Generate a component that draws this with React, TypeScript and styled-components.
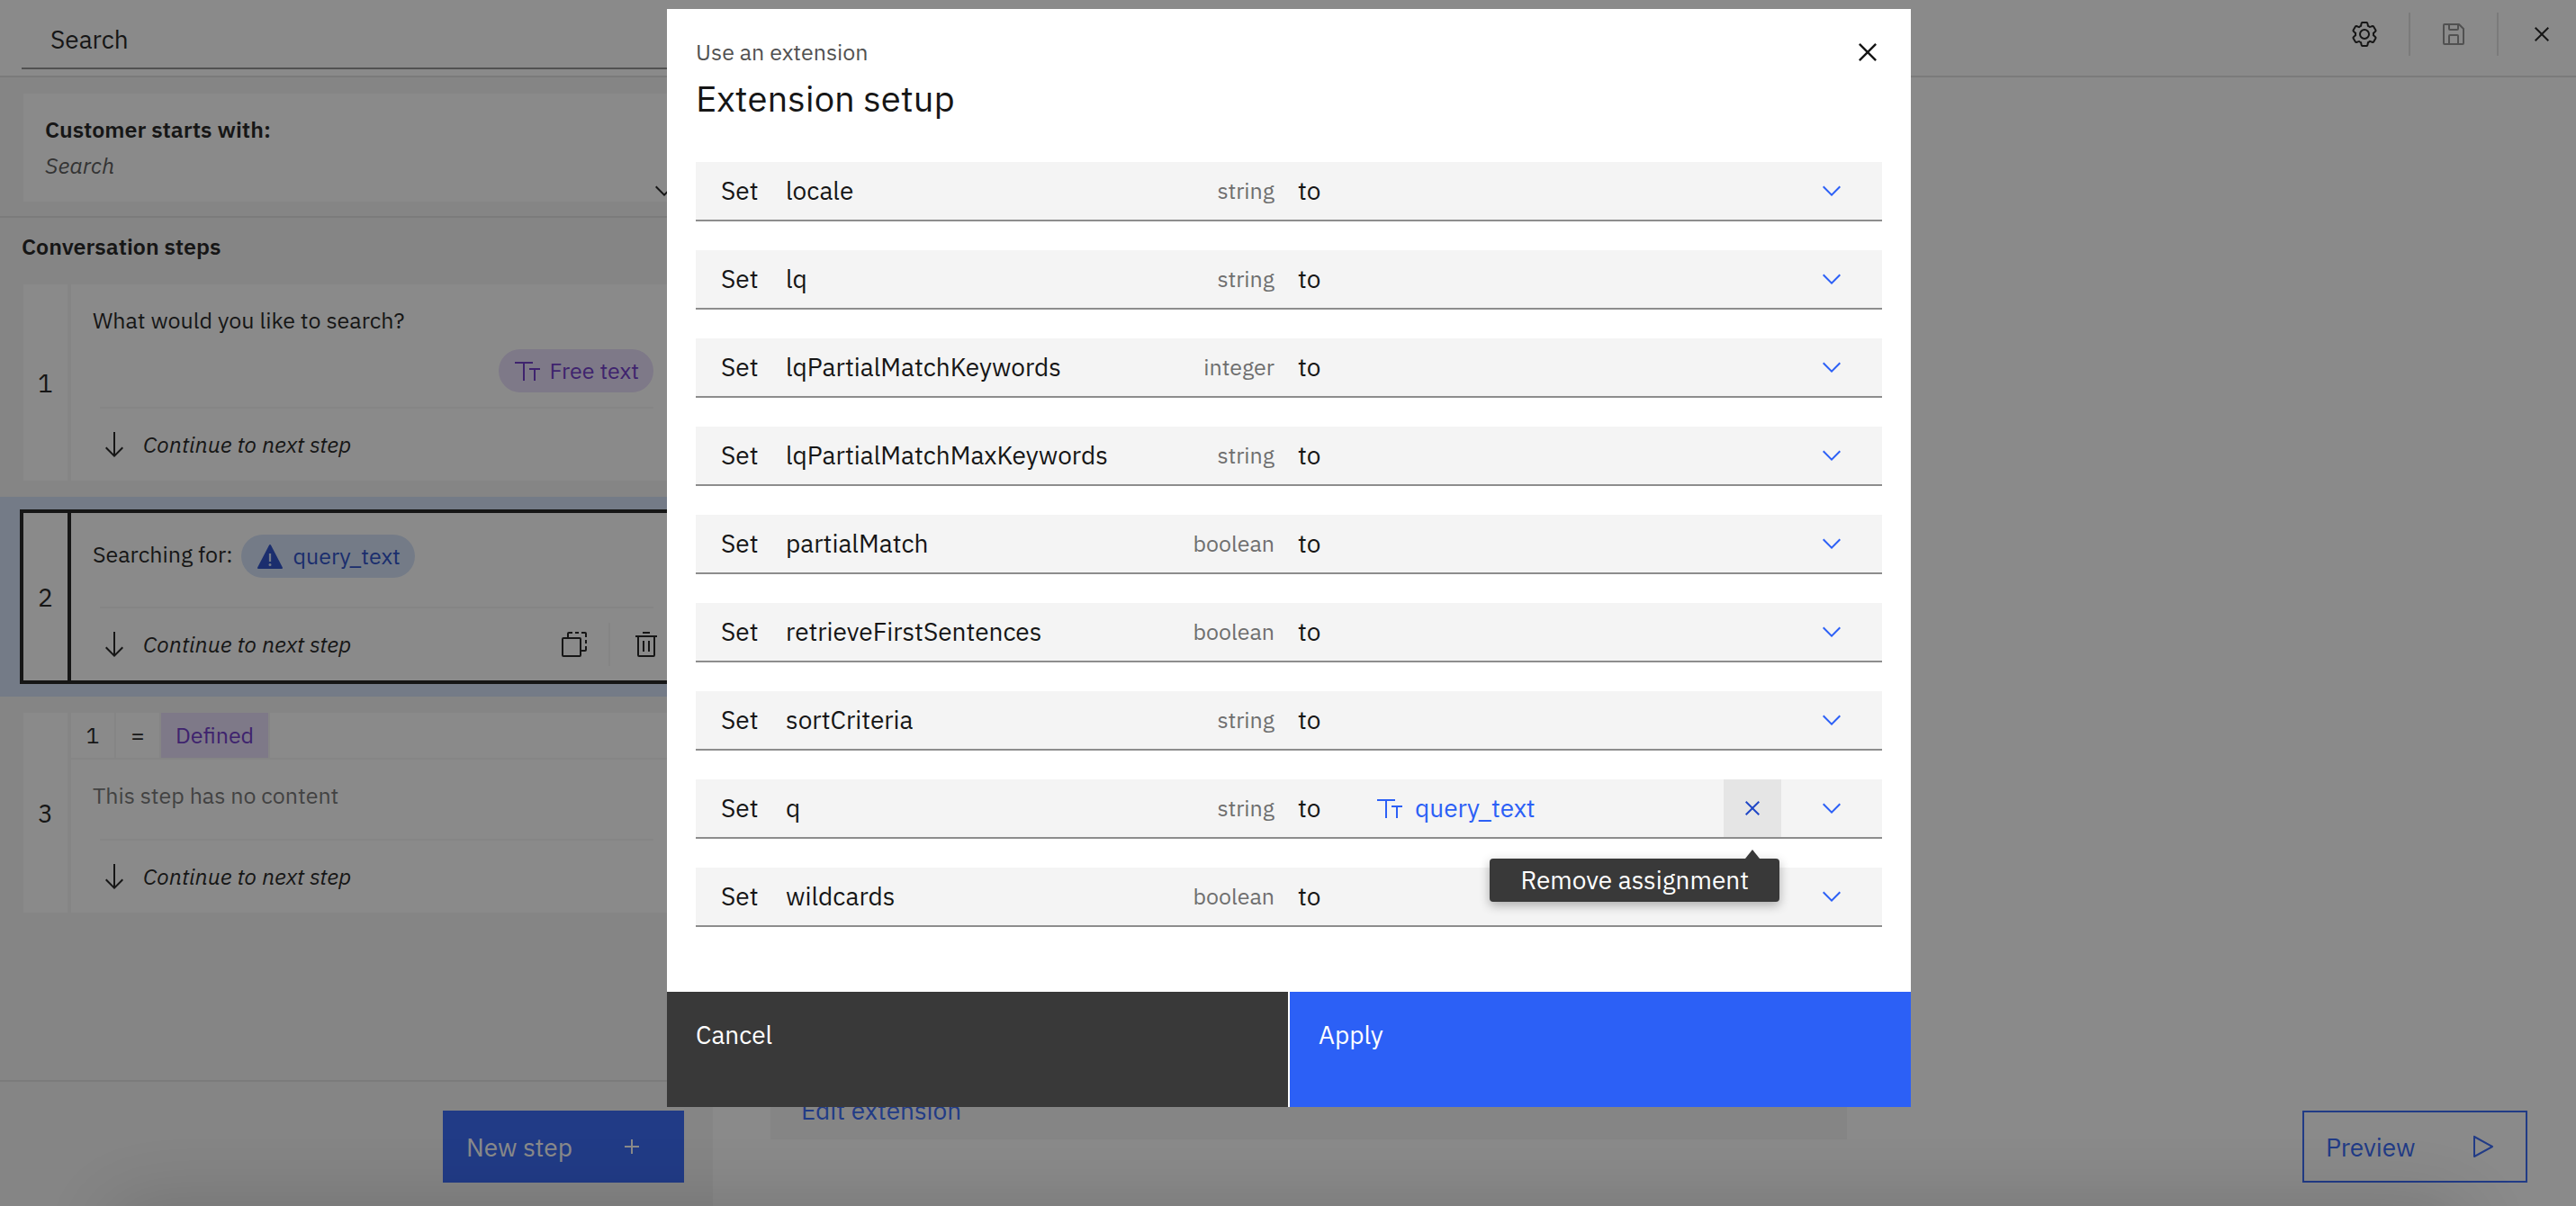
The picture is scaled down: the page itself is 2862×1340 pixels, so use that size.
import React from "react";
import styled, { createGlobalStyle, css } from "styled-components";

const color = {
  white: "#ffffff",
  layer: "#f4f4f4",
  border: "#e0e0e0",
  strong: "#8d8d8d",
  text: "#161616",
  secondary: "#525252",
  helper: "#6f6f6f",
  blue: "#2c60f6",
  blueHover: "#2047c6",
  blueTint: "#d3e1f9",
  purple: "#6831c6",
  purpleTint: "#e6dcfa",
  dark: "#393939",
};

const GlobalStyle = createGlobalStyle`
  *, *::before, *::after { box-sizing: border-box; }
  body { margin: 0; background: ${color.white}; }
  body, button, input {
    font-family: "IBM Plex Sans", Roboto, "Liberation Sans", sans-serif;
    color: ${color.text};
  }
  h1, h2, h3, p, ol, ul { margin: 0; padding: 0; font-weight: 400; }
  ol, ul { list-style: none; }
  button { border: 0; padding: 0; background: none; font-size: 28px; cursor: pointer; }
`;

/* ---------- icons ---------- */

const Svg = styled.svg<{ $size: number }>`
  display: block;
  flex: none;
  width: ${(p) => p.$size}px;
  height: ${(p) => p.$size}px;
  fill: currentColor;
`;

const glyphs = {
  close: "M24 9.4L22.6 8 16 14.6 9.4 8 8 9.4 14.6 16 8 22.6 9.4 24 16 17.4 22.6 24 24 22.6 17.4 16z",
  chevron: "M16 22L6 12 7.4 10.6 16 19.2 24.6 10.6 26 12z",
  add: "M17 15V8h-2v7H8v2h7v7h2v-7h7v-2z",
  play: "M7 28a1 1 0 0 1-1-1V5a1 1 0 0 1 1.48-.88l20 11a1 1 0 0 1 0 1.76l-20 11A1 1 0 0 1 7 28zM8 6.69V25.31L24.93 16z",
  text: "M23 27V15H18V13H30v2H25V27zM11 27V8H2V6H22V8H13V27z",
  arrow: "M15 2h2v24.17l7.59-7.58L26 20 16 30 6 20l1.41-1.41L15 26.17z",
  warning:
    "M29.89 28.54l-13-25a1 1 0 0 0-1.78 0l-13 25A1 1 0 0 0 3 30H29a1 1 0 0 0 .89-1.46zM14.88 13h2.25v9h-2.25zM16 27a1.5 1.5 0 1 1 1.5-1.5A1.5 1.5 0 0 1 16 27z",
  trash:
    "M12 12h2v12h-2zM18 12h2v12h-2zM4 6v2h2v20a2 2 0 0 0 2 2h16a2 2 0 0 0 2-2V8h2V6zM8 28V8h16v20zM12 2h8v2h-8z",
  save: "M27.71 9.29l-5-5A1 1 0 0 0 22 4H6A2 2 0 0 0 4 6V26a2 2 0 0 0 2 2H26a2 2 0 0 0 2-2V10a1 1 0 0 0-.29-.71zM12 6h8v4H12zm8 20H12V18h8zm2 0V18a2 2 0 0 0-2-2H12a2 2 0 0 0-2 2v8H6V6h4v4a2 2 0 0 0 2 2h8a2 2 0 0 0 2-2V6.41l4 4V26z",
  settings:
    "M27 16.76c0-.25 0-.5 0-.76s0-.51 0-.77l1.92-1.68A2 2 0 0 0 29.3 11L26.94 7a2 2 0 0 0-1.73-1 2 2 0 0 0-.64.1l-2.43.82a11.35 11.35 0 0 0-1.31-.75l-.51-2.52a2 2 0 0 0-2-1.61H13.64a2 2 0 0 0-2 1.61l-.51 2.52a11.48 11.48 0 0 0-1.32.75L7.43 6.06A2 2 0 0 0 6.79 6 2 2 0 0 0 5.06 7L2.7 11a2 2 0 0 0 .41 2.51L5 15.24c0 .25 0 .5 0 .76s0 .51 0 .77L3.11 18.45A2 2 0 0 0 2.7 21L5.06 25a2 2 0 0 0 1.73 1 2 2 0 0 0 .64-.1l2.43-.82a11.35 11.35 0 0 0 1.31.75l.51 2.52a2 2 0 0 0 2 1.61h4.72a2 2 0 0 0 2-1.61l.51-2.52a11.48 11.48 0 0 0 1.32-.75l2.42.82a2 2 0 0 0 .64.1 2 2 0 0 0 1.73-1L29.3 21a2 2 0 0 0-.41-2.51zM25.21 24l-3.43-1.16a8.86 8.86 0 0 1-2.71 1.57L18.36 28H13.64l-.71-3.55a9.36 9.36 0 0 1-2.7-1.57L6.79 24 4.43 20l2.72-2.4a8.9 8.9 0 0 1 0-3.13L4.43 12 6.79 8l3.43 1.16a8.86 8.86 0 0 1 2.71-1.57L13.64 4h4.72l.71 3.55a9.36 9.36 0 0 1 2.7 1.57L25.21 8 27.57 12l-2.72 2.4a8.9 8.9 0 0 1 0 3.13L27.57 20zM16 22a6 6 0 1 1 6-6A5.94 5.94 0 0 1 16 22zm0-10a3.91 3.91 0 0 0-4 4 3.91 3.91 0 0 0 4 4 3.91 3.91 0 0 0 4-4A3.91 3.91 0 0 0 16 12z",
  duplicate:
    "M22 10v18H4V10h18m0-2H4a2 2 0 0 0-2 2v18a2 2 0 0 0 2 2h18a2 2 0 0 0 2-2V10a2 2 0 0 0-2-2zM8 8V4a2 2 0 0 1 2-2h4v2h-4v4zM17 2h4v2h-4zM24 2h4a2 2 0 0 1 2 2v4h-2V4h-4zM28 11h2v4h-2zM24 22h4v-4h2v4a2 2 0 0 1-2 2h-4z",
};

function Icon({ name, size = 32 }: { name: keyof typeof glyphs; size?: number }) {
  return (
    <Svg $size={size} viewBox="0 0 32 32" aria-hidden="true">
      <path fillRule="evenodd" d={glyphs[name]} />
    </Svg>
  );
}

/* ---------- page behind the dialog ---------- */

const Page = styled.div`
  position: relative;
  display: flex;
  flex-direction: column;
  height: 100vh;
  overflow: hidden;
`;

const Header = styled.header`
  display: flex;
  justify-content: space-between;
  border-bottom: 2px solid ${color.border};
  flex: none;
`;

const TitleField = styled.input`
  width: 744px;
  margin: 13px 0 7px 24px;
  height: 64px;
  padding: 0 32px 2px;
  border: 0;
  border-bottom: 2px solid ${color.strong};
  background: none;
  font-size: 28px;
`;

const HeaderActions = styled.div`
  display: flex;
  align-items: center;
  height: 76px;
`;

const HeaderButton = styled.button<{ $disabled?: boolean; $last?: boolean }>`
  display: flex;
  align-items: center;
  justify-content: center;
  height: 48px;
  width: ${(p) => (p.$last ? 88 : 98)}px;
  padding-left: ${(p) => (p.$last ? 10 : 0)}px;
  color: ${(p) => (p.$disabled ? color.strong : color.text)};
  & + & {
    border-left: 2px solid ${color.border};
  }
`;

const Workspace = styled.div`
  display: flex;
  flex: 1;
  min-height: 0;
`;

const StepsPanel = styled.aside`
  display: flex;
  flex-direction: column;
  flex: none;
  width: 792px;
  background: ${color.layer};
`;

const StartSection = styled.section`
  padding: 18px 26px 16px;
  border-bottom: 2px solid ${color.border};
`;

const StartCard = styled.div`
  display: grid;
  grid-template-columns: 1fr auto;
  align-items: end;
  height: 120px;
  padding: 20px 12px 0 24px;
  background: ${color.white};
`;

const StartText = styled.div`
  align-self: start;
  font-size: 25px;
  line-height: 40px;
`;

const StartTitle = styled.h2`
  font-size: 25px;
  font-weight: 600;
`;

const Phrase = styled.p`
  color: ${color.secondary};
  font-style: italic;
`;

const CollapseButton = styled.button`
  display: flex;
  align-items: center;
  height: 24px;
`;

const StepsTitle = styled.h2`
  padding: 16px 24px 26px;
  font-size: 25px;
  line-height: 32px;
  font-weight: 600;
`;

const StepList = styled.ol`
  display: flex;
  flex-direction: column;
  gap: 18px;
  flex: 1;
`;

const StepItem = styled.li<{ $selected?: boolean }>`
  padding: 0 26px;
  ${(p) =>
    p.$selected &&
    css`
      padding: 14px 22px;
      background: ${color.blueTint};
    `}
`;

const StepCard = styled.div<{ $selected?: boolean }>`
  display: flex;
  background: ${color.white};
  border: ${(p) => (p.$selected ? `4px solid ${color.text}` : "0")};
`;

const StepNumber = styled.div<{ $selected?: boolean }>`
  display: flex;
  align-items: center;
  justify-content: center;
  width: 53px;
  border-right: 4px solid ${(p) => (p.$selected ? color.text : color.layer)};
  font-size: 28px;
`;

const StepMain = styled.div`
  flex: 1;
  font-size: 25px;
  line-height: 32px;
`;

const Conditions = styled.div`
  display: flex;
  border-bottom: 2px solid ${color.layer};
`;

const Condition = styled.span<{ $tinted?: boolean }>`
  min-width: 50px;
  padding: 9px 16px;
  text-align: center;
  border-right: 2px solid ${color.layer};
  ${(p) =>
    p.$tinted &&
    css`
      color: ${color.purple};
      background: ${color.purpleTint};
    `}
`;

const StepBody = styled.div<{ $tall?: boolean }>`
  display: flex;
  flex-direction: column;
  gap: 16px;
  padding: 24px 40px ${(p) => (p.$tall ? 32 : 16)}px 24px;
`;

const StepText = styled.p<{ $muted?: boolean; $withTag?: boolean }>`
  display: flex;
  align-items: flex-start;
  gap: 10px;
  line-height: ${(p) => (p.$withTag ? 44 : 32)}px;
  color: ${(p) => (p.$muted ? color.helper : color.text)};
`;

const Tag = styled.span<{ $tone: "purple" | "blue" }>`
  display: inline-flex;
  align-items: center;
  align-self: flex-end;
  gap: 9px;
  height: 48px;
  padding: 0 16px;
  border-radius: 24px;
  ${(p) =>
    p.$tone === "purple"
      ? css`
          color: ${color.purple};
          background: ${color.purpleTint};
        `
      : css`
          color: ${color.blueHover};
          background: ${color.blueTint};
        `}
`;

const StepFooter = styled.div`
  display: flex;
  align-items: center;
  height: 82px;
  margin: 0 40px 0 32px;
  border-top: 2px solid ${color.layer};
`;

const NextAction = styled.span`
  display: flex;
  align-items: center;
  gap: 16px;
  flex: 1;
  font-style: italic;
`;

const StepTool = styled.button`
  display: flex;
  align-items: center;
  justify-content: center;
  width: 76px;
  height: 48px;
  & + & {
    width: 82px;
    margin-right: -32px;
    border-left: 2px solid ${color.layer};
  }
`;

const PanelFooter = styled.div`
  display: flex;
  justify-content: flex-end;
  padding: 32px 32px 26px;
  border-top: 2px solid ${color.border};
`;

const ActionButton = styled.button<{ $kind: "primary" | "tertiary" }>`
  display: flex;
  align-items: center;
  justify-content: space-between;
  height: 80px;
  width: ${(p) => (p.$kind === "primary" ? 268 : 250)}px;
  padding: 0 ${(p) => (p.$kind === "primary" ? 40 : 32)}px 0 24px;
  border: 2px solid ${color.blue};
  color: ${(p) => (p.$kind === "primary" ? color.white : color.blue)};
  background: ${(p) => (p.$kind === "primary" ? color.blue : "transparent")};
`;

const Editor = styled.main`
  display: flex;
  flex: 1;
  align-items: flex-end;
  justify-content: space-between;
  padding: 0 54px 26px 64px;
`;

const ExtensionCard = styled.section`
  flex: 0 1 1196px;
  margin-bottom: 48px;
  padding: 400px 34px 16px;
  background: ${color.layer};
`;

const EditLink = styled.a`
  color: ${color.blue};
  font-size: 28px;
  line-height: 32px;
  text-decoration: none;
`;

const DockShade = styled.div`
  position: absolute;
  left: 120px;
  right: 120px;
  top: 100%;
  height: 80px;
  border-radius: 40px;
  box-shadow: 0 0 80px rgba(0, 0, 0, 0.16);
`;

/* ---------- dialog ---------- */

const Overlay = styled.div`
  position: absolute;
  inset: 0;
  display: flex;
  align-items: flex-start;
  justify-content: center;
  padding: 10px 0 0 2px;
  background: rgba(22, 22, 22, 0.5);
`;

const Dialog = styled.div`
  width: 100%;
  max-width: 1382px;
  background: ${color.white};
`;

const DialogHeader = styled.div`
  display: flex;
  align-items: flex-start;
  justify-content: space-between;
  padding: 28px 28px 0 32px;
`;

const DialogLabel = styled.p`
  color: ${color.secondary};
  font-size: 25px;
  line-height: 40px;
`;

const DialogTitle = styled.h1`
  font-size: 40px;
  line-height: 62px;
`;

const CloseButton = styled.button`
  display: block;
  height: 40px;
`;

const Assignments = styled.ul`
  display: flex;
  flex-direction: column;
  gap: 32px;
  padding: 40px 32px 72px;
`;

const Assignment = styled.li`
  display: grid;
  grid-template-columns: 72px 569fr 86px 387fr 64px 112px;
  align-items: center;
  height: 66px;
  padding-left: 28px;
  border-bottom: 2px solid ${color.strong};
  background: ${color.layer};
  font-size: 28px;
  line-height: 32px;
`;

const Variable = styled.span`
  display: flex;
  align-items: center;
  justify-content: space-between;
  margin-right: 26px;
`;

const TypeName = styled.span`
  color: ${color.helper};
  font-size: 25px;
`;

const Value = styled.span`
  display: flex;
  align-items: center;
  gap: 12px;
  color: ${color.blue};
`;

const RemoveWrap = styled.span`
  position: relative;
`;

const RemoveButton = styled.button`
  display: flex;
  align-items: center;
  justify-content: center;
  width: 64px;
  height: 64px;
  color: ${color.blueHover};
  background: #e5e5e5;
`;

const Tooltip = styled.span`
  position: absolute;
  z-index: 1;
  top: 88px;
  right: 2px;
  padding: 0 34px;
  border-radius: 4px;
  color: ${color.white};
  background: ${color.dark};
  box-shadow: 0 4px 12px rgba(0, 0, 0, 0.3);
  line-height: 48px;
  white-space: nowrap;
  &::before {
    content: "";
    position: absolute;
    right: 22px;
    bottom: 100%;
    border: 8px solid transparent;
    border-top: 0;
    border-bottom: 10px solid ${color.dark};
  }
`;

const ExpandButton = styled.button`
  display: flex;
  align-items: center;
  justify-content: center;
  height: 64px;
  color: ${color.blue};
`;

const DialogFooter = styled.div`
  display: grid;
  grid-template-columns: 1fr 1fr;
  gap: 2px;
`;

const FooterButton = styled.button<{ $primary?: boolean }>`
  display: flex;
  height: 128px;
  padding: 32px;
  color: ${color.white};
  background: ${(p) => (p.$primary ? color.blue : color.dark)};
  line-height: 32px;
`;

/* ---------- data ---------- */

const parameters: { name: string; type: string; value?: string }[] = [
  { name: "locale", type: "string" },
  { name: "lq", type: "string" },
  { name: "lqPartialMatchKeywords", type: "integer" },
  { name: "lqPartialMatchMaxKeywords", type: "string" },
  { name: "partialMatch", type: "boolean" },
  { name: "retrieveFirstSentences", type: "boolean" },
  { name: "sortCriteria", type: "string" },
  { name: "q", type: "string", value: "query_text" },
  { name: "wildcards", type: "boolean" },
];

function StepEnd({ tools }: { tools?: boolean }) {
  return (
    <StepFooter>
      <NextAction>
        <Icon name="arrow" />
        Continue to next step
      </NextAction>
      {tools && (
        <>
          <StepTool aria-label="Duplicate step">
            <Icon name="duplicate" />
          </StepTool>
          <StepTool aria-label="Delete step">
            <Icon name="trash" />
          </StepTool>
        </>
      )}
    </StepFooter>
  );
}

function ExtensionDialog() {
  return (
    <Overlay>
      <Dialog role="dialog" aria-modal="true" aria-labelledby="dialog-title">
        <DialogHeader>
          <div>
            <DialogLabel>Use an extension</DialogLabel>
            <DialogTitle id="dialog-title">Extension setup</DialogTitle>
          </div>
          <CloseButton aria-label="Close">
            <Icon name="close" size={40} />
          </CloseButton>
        </DialogHeader>
        <Assignments>
          {parameters.map(({ name, type, value }) => (
            <Assignment key={name}>
              <span>Set</span>
              <Variable>
                {name}
                <TypeName>{type}</TypeName>
              </Variable>
              <span>to</span>
              <Value>
                {value && (
                  <>
                    <Icon name="text" />
                    {value}
                  </>
                )}
              </Value>
              <RemoveWrap>
                {value && (
                  <>
                    <RemoveButton aria-label="Remove assignment">
                      <Icon name="close" />
                    </RemoveButton>
                    <Tooltip role="tooltip">Remove assignment</Tooltip>
                  </>
                )}
              </RemoveWrap>
              <ExpandButton aria-label={`Choose a value for ${name}`}>
                <Icon name="chevron" />
              </ExpandButton>
            </Assignment>
          ))}
        </Assignments>
        <DialogFooter>
          <FooterButton>Cancel</FooterButton>
          <FooterButton $primary>Apply</FooterButton>
        </DialogFooter>
      </Dialog>
    </Overlay>
  );
}

export default function App() {
  return (
    <Page>
      <GlobalStyle />
      <Header>
        <TitleField aria-label="Action name" defaultValue="Search" />
        <HeaderActions>
          <HeaderButton aria-label="Settings">
            <Icon name="settings" />
          </HeaderButton>
          <HeaderButton aria-label="Save" $disabled>
            <Icon name="save" />
          </HeaderButton>
          <HeaderButton aria-label="Close editor" $last>
            <Icon name="close" />
          </HeaderButton>
        </HeaderActions>
      </Header>
      <Workspace>
        <StepsPanel>
          <StartSection>
            <StartCard>
              <StartText>
                <StartTitle>Customer starts with:</StartTitle>
                <Phrase>Search</Phrase>
              </StartText>
              <CollapseButton aria-label="Show phrases">
                <Icon name="chevron" />
              </CollapseButton>
            </StartCard>
          </StartSection>
          <StepsTitle>Conversation steps</StepsTitle>
          <StepList>
            <StepItem>
              <StepCard>
                <StepNumber>1</StepNumber>
                <StepMain>
                  <StepBody>
                    <StepText>What would you like to search?</StepText>
                    <Tag $tone="purple">
                      <Icon name="text" />
                      Free text
                    </Tag>
                  </StepBody>
                  <StepEnd />
                </StepMain>
              </StepCard>
            </StepItem>
            <StepItem $selected>
              <StepCard $selected>
                <StepNumber $selected>2</StepNumber>
                <StepMain>
                  <StepBody $tall>
                    <StepText $withTag>
                      Searching for:
                      <Tag $tone="blue">
                        <Icon name="warning" />
                        query_text
                      </Tag>
                    </StepText>
                  </StepBody>
                  <StepEnd tools />
                </StepMain>
              </StepCard>
            </StepItem>
            <StepItem>
              <StepCard>
                <StepNumber>3</StepNumber>
                <StepMain>
                  <Conditions>
                    <Condition>1</Condition>
                    <Condition>=</Condition>
                    <Condition $tinted>Defined</Condition>
                  </Conditions>
                  <StepBody $tall>
                    <StepText $muted>This step has no content</StepText>
                  </StepBody>
                  <StepEnd />
                </StepMain>
              </StepCard>
            </StepItem>
          </StepList>
          <PanelFooter>
            <ActionButton $kind="primary">
              New step
              <Icon name="add" />
            </ActionButton>
          </PanelFooter>
        </StepsPanel>
        <Editor>
          <ExtensionCard>
            <EditLink href="#extension">Edit extension</EditLink>
          </ExtensionCard>
          <ActionButton $kind="tertiary">
            Preview
            <Icon name="play" />
          </ActionButton>
        </Editor>
      </Workspace>
      <ExtensionDialog />
      <DockShade />
    </Page>
  );
}
